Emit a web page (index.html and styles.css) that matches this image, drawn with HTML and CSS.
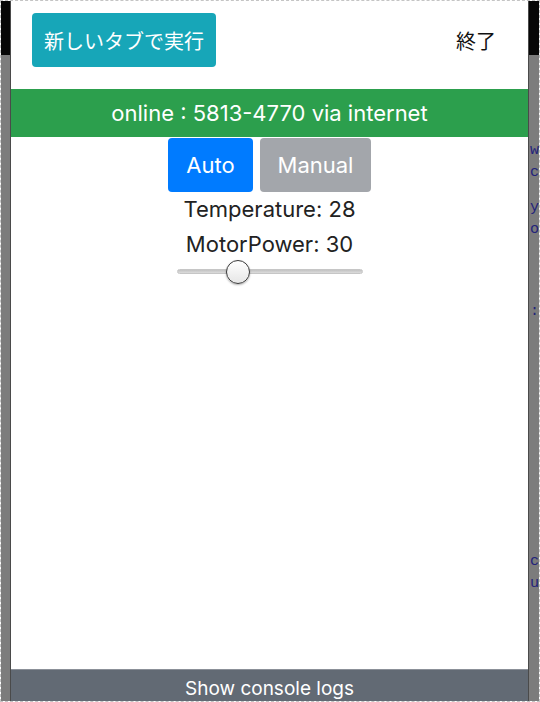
FILE: index.html
```html
<!DOCTYPE html>
<html lang="ja">
<head>
    <meta charset="UTF-8">
    <meta name="viewport" content="width=device-width, initial-scale=1.0">
    <title>Remote Control</title>
    <link rel="stylesheet" href="styles.css">
</head>
<body>

<div class="screen">
    <div class="side side-left">
        <div class="side-top"></div>
    </div>

    <div class="panel">
        <div class="header">
            <button class="btn btn-info">新しいタブで実行</button>
            <button class="btn-close">終了</button>
        </div>

        <div class="status">online : 5813-4770 via internet</div>

        <div class="content">
            <div class="modes">
                <button class="btn btn-primary">Auto</button>
                <button class="btn btn-secondary" disabled>Manual</button>
            </div>
            <div class="reading">Temperature: 28</div>
            <div class="reading">MotorPower: 30</div>
            <input class="power" type="range" min="0" max="100" value="30">
        </div>

        <div class="footer">Show console logs</div>
    </div>

    <div class="side side-right">
        <div class="side-top"></div>
        <!-- code of the page behind the dialog -->
        <div class="behind">
            <div class="code code-a">w</div>
            <div class="code">c</div>
            <div class="code code-b">y</div>
            <div class="code">o</div>
            <div class="code code-c">:</div>
            <div class="code code-d">c</div>
            <div class="code">u</div>
        </div>
    </div>
</div>

</body>
</html>
```

FILE: styles.css
```css
body {
    margin: 0;
    font-family: Inter, "Noto Sans CJK JP", sans-serif;
}
.screen {
    display: flex;
    height: 702px;
    box-sizing: border-box;
    border: 1px dashed #c4c4c4;
    overflow: hidden;
}
.side {
    background-color: #7c7c7c;
    display: flex;
    flex-direction: column;
}
.side-left {
    width: 9px;
    border-right: 1px solid #4a4a4a;
}
.side-right {
    width: 10px;
    border-left: 1px solid #4a4a4a;
    overflow: hidden;
}
.side-top {
    height: 54px;
    background-color: #070707;
    flex-shrink: 0;
}
.behind {
    font-family: "Liberation Mono", monospace;
    font-size: 15px;
    line-height: 22px;
    color: #23237a;
    padding-left: 1px;
}
.code {
    height: 22px;
}
.code-a {
    margin-top: 85px;
}
.code-b {
    margin-top: 13px;
}
.code-c {
    margin-top: 60px;
}
.code-d {
    margin-top: 228px;
}
.panel {
    flex: 1;
    display: flex;
    flex-direction: column;
    background-color: #fff;
}
.header {
    height: 88px;
    box-sizing: border-box;
    display: flex;
    align-items: flex-start;
    justify-content: space-between;
    padding: 12px 20px 0 21px;
}
.btn {
    font-family: inherit;
    font-size: 22px;
    color: #fff;
    border: none;
    border-radius: 4px;
    height: 54px;
    padding: 0 12px;
}
.btn-info {
    font-size: 20px;
    background-color: #17a6b8;
}
.btn-close {
    font-family: inherit;
    font-size: 20px;
    background: none;
    border: none;
    color: #111;
    height: 54px;
    padding: 0 12px;
}
.status {
    height: 48px;
    background-color: #2c9f4d;
    color: #fff;
    font-size: 22px;
    display: flex;
    align-items: center;
    justify-content: center;
}
.content {
    flex: 1;
    display: flex;
    flex-direction: column;
    align-items: center;
    padding-top: 1px;
}
.modes {
    display: flex;
    gap: 7px;
}
.btn-primary {
    background-color: #007bff;
    width: 85px;
    padding: 0;
}
.btn-secondary {
    background-color: #a3a6ab;
    width: 111px;
    padding: 0;
}
.reading {
    font-size: 22px;
    color: #222;
    height: 35px;
    line-height: 35px;
}
.power {
    -webkit-appearance: none;
    appearance: none;
    width: 186px;
    height: 24px;
    margin: -3px 0 0 0;
    background: transparent;
}
.power::-webkit-slider-runnable-track {
    height: 5px;
    border-radius: 3px;
    background: linear-gradient(#c2c2c2, #dcdcdc);
    border: 1px solid #c6c6c6;
}
.power::-webkit-slider-thumb {
    -webkit-appearance: none;
    width: 24px;
    height: 24px;
    margin-top: -10px;
    border-radius: 50%;
    background: linear-gradient(#ffffff, #e6e6e6);
    border: 1px solid #3a3a3a;
    box-shadow: 0 1px 2px rgba(0, 0, 0, 0.3);
    box-sizing: border-box;
}
.footer {
    height: 32px;
    box-sizing: border-box;
    background-color: #626a74;
    color: #fff;
    font-size: 19px;
    text-align: center;
    padding-top: 7px;
    border-top: 1px solid #8b9098;
}
```
